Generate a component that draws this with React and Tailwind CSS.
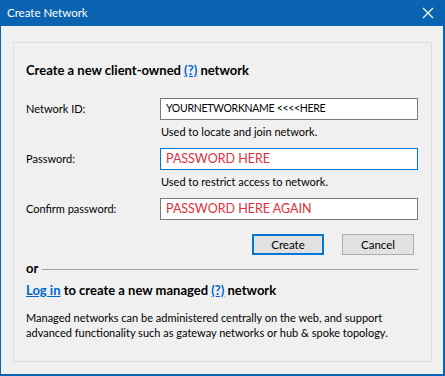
import React from "react";

const font = { fontFamily: 'Lato, "Liberation Sans", sans-serif' };

const Field = ({ label, value, hint, red, focused }) => (
  <div className="flex items-start">
    <div className="w-[134px] h-[22px] flex items-center text-[11px] text-black">{label}</div>
    <div className="flex flex-col">
      <div
        className={
          "w-[258px] h-[22px] bg-white flex items-center px-[5px] border " +
          (focused ? "border-[#0078d7]" : "border-[#7a7a7a]")
        }
      >
        <span className={red ? "text-[12.5px] text-[#e3303c]" : "text-[10.5px] tracking-[-0.3px] text-black"}>
          {value}
        </span>
      </div>
      {hint && <div className="text-[11px] text-black pl-[1px] mt-[2px] h-[20px] leading-[20px]">{hint}</div>}
    </div>
  </div>
);

const Help = () => <span className="text-[#0066cc] underline">(?)</span>;

export default function App() {
  return (
    <div
      style={font}
      className="w-[445px] h-[376px] bg-[#f0f0f0] border-l border-r-2 border-b-2 border-[#0a63b0] flex flex-col"
    >
      <div className="h-[26px] bg-[#0a63b0] flex items-center justify-between pl-[6px] pr-[9px] text-white text-[11.5px]">
        <span>Create Network</span>
        <svg width="12" height="12" viewBox="0 0 12 12">
          <path d="M1 1L11 11M11 1L1 11" stroke="white" strokeWidth="1.2" />
        </svg>
      </div>
      <div className="flex-1 pt-[16px] px-[12px] pb-[12px] flex">
        <div className="flex-1 border border-[#dcdcdc] pl-[12px] pr-[13px] pt-[19px]">
          <div className="text-[13px] leading-[16px] font-bold text-black">
            Create a new client-owned <Help /> network
          </div>
          <div className="mt-[20px] flex flex-col gap-[6px]">
            <Field label="Network ID:" value="YOURNETWORKNAME <<<<HERE" hint="Used to locate and join network." />
            <Field label="Password:" value="PASSWORD HERE" red focused hint="Used to restrict access to network." />
            <Field label="Confirm password:" value="PASSWORD HERE AGAIN" red />
          </div>
          <div className="flex justify-end gap-[18px] mt-[14px] pr-[4px]">
            <button className="w-[72px] h-[21px] bg-[#e1e1e1] border-2 border-[#0078d7] text-[11.5px] text-black">Create</button>
            <button className="w-[72px] h-[21px] bg-[#e1e1e1] border border-[#adadad] text-[11.5px] text-black">Cancel</button>
          </div>
          <div className="flex items-center mt-[6px] h-[16px]">
            <span className="text-[13px] font-bold text-black">or</span>
            <div className="flex-1 h-px bg-[#a0a0a0] ml-[4px]" />
          </div>
          <div className="mt-[5px] text-[13px] leading-[16px] font-bold text-black">
            <span className="text-[#0066cc] underline">Log in</span> to create a new managed <Help /> network
          </div>
          <p className="mt-[12px] text-[11px] leading-[15px] text-black">
            Managed networks can be administered centrally on the web, and support
            <br />
            advanced functionality such as gateway networks or hub &amp; spoke topology.
          </p>
        </div>
      </div>
    </div>
  );
}
